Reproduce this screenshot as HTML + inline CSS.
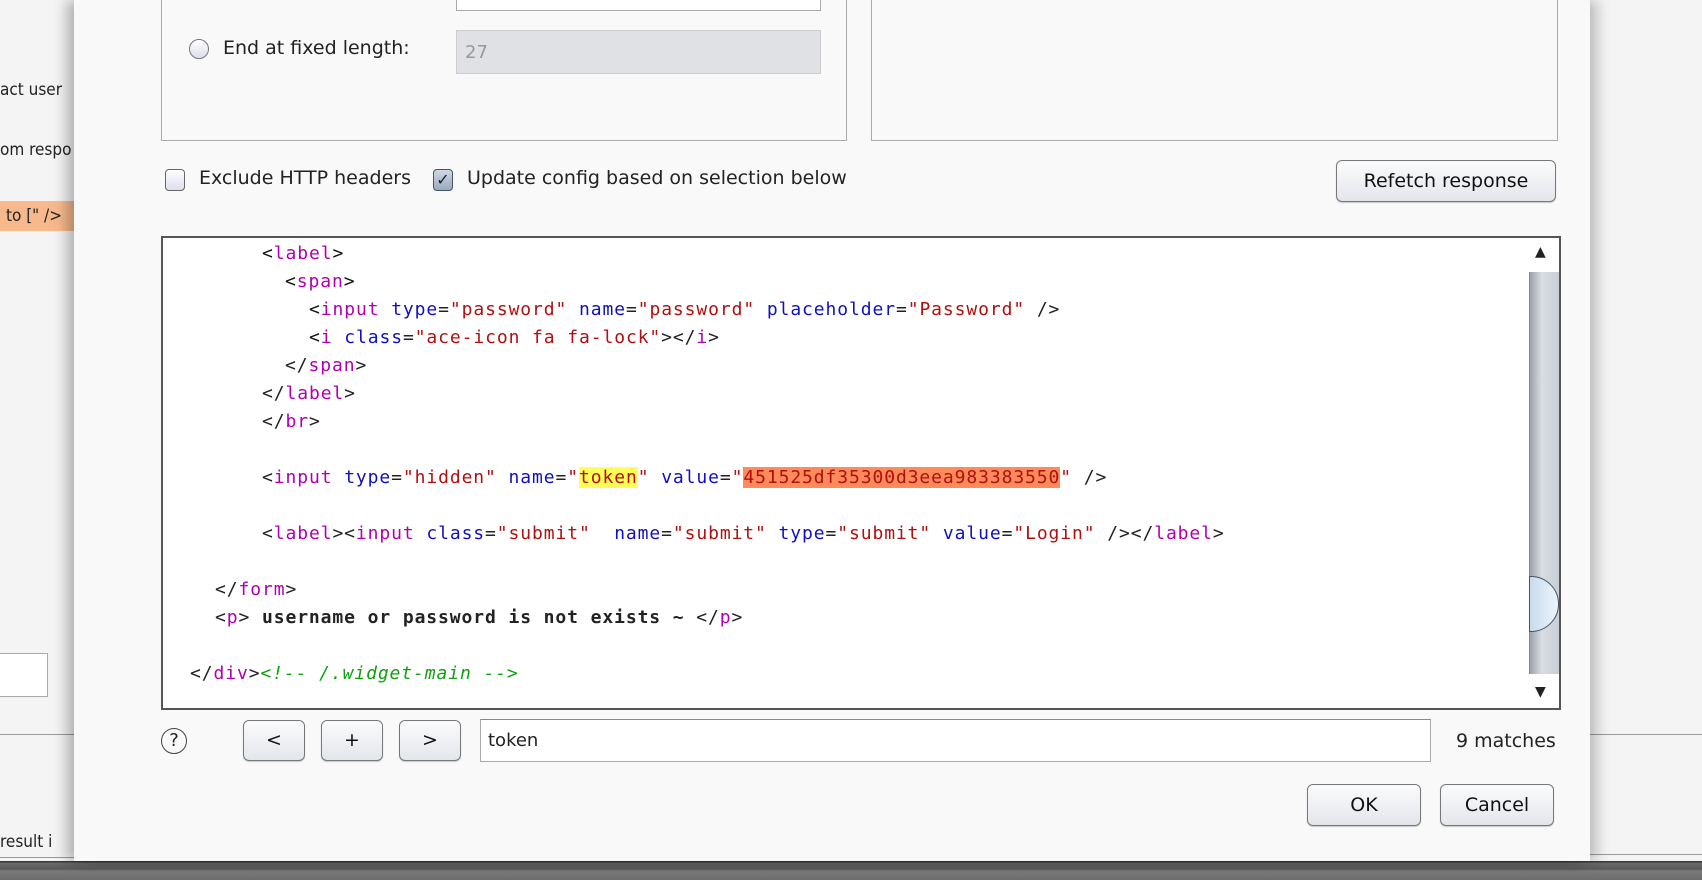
<!DOCTYPE html>
<html><head><meta charset="utf-8"><style>
*{margin:0;padding:0;box-sizing:border-box}
body{width:1702px;height:880px;overflow:hidden;background:#f4f4f4;font-family:"DejaVu Sans","Liberation Sans",sans-serif;font-size:19px;color:#222;position:relative}
.a{position:absolute}
.dlg{left:74px;top:0;width:1516px;height:861px;background:#f9f9f9;box-shadow:-8px 0 12px rgba(0,0,0,.25),8px 0 12px rgba(0,0,0,.2)}
.btn{position:absolute;border:1px solid #777;border-radius:6px;background:linear-gradient(#fbfbfc,#e3e6eb);text-align:center;font-size:19px;color:#111;box-shadow:0 1px 1px rgba(0,0,0,.2)}
.code{font-family:"DejaVu Sans Mono","Liberation Mono",monospace;font-size:18px;white-space:pre;position:absolute;left:0;line-height:28px;letter-spacing:0.9px}
.t{color:#111}.g{color:#b000b0}.at{color:#1010c0}.v{color:#b01010}.c{color:#10a010;font-style:italic}
.sm{font-family:"DejaVu Sans Condensed","DejaVu Sans",sans-serif;font-size:17px}
</style></head><body>
<div class="a sm" style="left:0;top:80px">act user</div>
<div class="a sm" style="left:0;top:140px">om respo</div>
<div class="a sm" style="left:0;top:201px;width:74px;height:30px;background:#f7b98c;line-height:30px;padding-left:6px">to [" /></div>
<div class="a" style="left:-2px;top:653px;width:50px;height:44px;border:1px solid #aaa;background:#fff"></div>
<div class="a" style="left:0;top:734px;width:74px;height:1px;background:#999"></div>
<div class="a sm" style="left:0;top:832px">result i</div>
<div class="a" style="left:0;top:857px;width:74px;height:1px;background:#999"></div>
<div class="a" style="left:1590px;top:734px;width:112px;height:1px;background:#999"></div>
<div class="a" style="left:1590px;top:854px;width:112px;height:1px;background:#999"></div>
<div class="a" style="left:0;top:861px;width:1702px;height:19px;background:linear-gradient(#3a3a3a 0,#3a3a3a 1px,#6a6a6a 2px,#5a5a5a 8px,#7a7a7a 10px,#6c6c6c 19px)"></div>

<div class="a dlg"></div>
<div class="a" style="left:161px;top:-2px;width:686px;height:143px;border:1px solid #aaa"></div>
<div class="a" style="left:871px;top:-2px;width:687px;height:143px;border:1px solid #aaa"></div>
<div class="a" style="left:456px;top:-2px;width:365px;height:13px;border:1px solid #aaa;background:#fff"></div>
<div class="a" style="left:189px;top:39px;width:20px;height:20px;border-radius:50%;border:1px solid #777;background:linear-gradient(#fff,#dde)"></div>
<div class="a" style="left:223px;top:37px">End at fixed length:</div>
<div class="a" style="left:456px;top:30px;width:365px;height:44px;background:#dfe1e5;border:1px solid #ccc;color:#999;padding:11px 8px;font-size:18px">27</div>

<div class="a" style="left:165px;top:169px;width:20px;height:22px;border:1px solid #666;border-radius:4px;background:linear-gradient(#fff,#dde)"></div>
<div class="a" style="left:199px;top:167px">Exclude HTTP headers</div>
<div class="a" style="left:433px;top:169px;width:20px;height:22px;border:1px solid #456;border-radius:4px;background:linear-gradient(#cfd8e6,#9aaac0);font-size:16px;line-height:20px;text-align:center;color:#123">✓</div>
<div class="a" style="left:467px;top:167px">Update config based on selection below</div>
<div class="btn" style="left:1336px;top:160px;width:220px;height:42px;line-height:40px">Refetch response</div>

<div class="a" style="left:161px;top:236px;width:1400px;height:474px;border:2px solid #555;background:#fff;overflow:hidden">
<div class="code" style="top:2px;left:0;padding-left:0">
<span style="position:absolute;left:99px;top:0"><span class="t">&lt;</span><span class="g">label</span><span class="t">&gt;</span></span>
<span style="position:absolute;left:122px;top:28px"><span class="t">&lt;</span><span class="g">span</span><span class="t">&gt;</span></span>
<span style="position:absolute;left:146px;top:56px"><span class="t">&lt;</span><span class="g">input</span> <span class="at">type</span>=<span class="v">"password"</span> <span class="at">name</span>=<span class="v">"password"</span> <span class="at">placeholder</span>=<span class="v">"Password"</span> /&gt;</span>
<span style="position:absolute;left:146px;top:84px"><span class="t">&lt;</span><span class="g">i</span> <span class="at">class</span>=<span class="v">"ace-icon fa fa-lock"</span>&gt;&lt;/<span class="g">i</span>&gt;</span>
<span style="position:absolute;left:122px;top:112px">&lt;/<span class="g">span</span>&gt;</span>
<span style="position:absolute;left:99px;top:140px">&lt;/<span class="g">label</span>&gt;</span>
<span style="position:absolute;left:99px;top:168px">&lt;/<span class="g">br</span>&gt;</span>
<span style="position:absolute;left:99px;top:224px">&lt;<span class="g">input</span> <span class="at">type</span>=<span class="v">"hidden"</span> <span class="at">name</span>=<span class="v">"<span style="background:#ffff55">token</span>"</span> <span class="at">value</span>=<span class="v">"<span style="background:#ff8a5a">451525df35300d3eea983383550</span>"</span> /&gt;</span>
<span style="position:absolute;left:99px;top:280px">&lt;<span class="g">label</span>&gt;&lt;<span class="g">input</span> <span class="at">class</span>=<span class="v">"submit"</span>  <span class="at">name</span>=<span class="v">"submit"</span> <span class="at">type</span>=<span class="v">"submit"</span> <span class="at">value</span>=<span class="v">"Login"</span> /&gt;&lt;/<span class="g">label</span>&gt;</span>
<span style="position:absolute;left:52px;top:336px">&lt;/<span class="g">form</span>&gt;</span>
<span style="position:absolute;left:52px;top:364px">&lt;<span class="g">p</span>&gt; <b>username or password is not exists ~</b> &lt;/<span class="g">p</span>&gt;</span>
<span style="position:absolute;left:27px;top:420px">&lt;/<span class="g">div</span>&gt;<span class="c">&lt;!-- /.widget-main --&gt;</span></span>
</div>
<div class="a" style="left:1366px;top:0;width:30px;height:470px;background:linear-gradient(90deg,#9ea3ab,#d8dce2 40%,#c9ced6);border-left:1px solid #888"></div>
<div class="a" style="left:1366px;top:0;width:30px;height:34px;background:#fff"></div>
<div class="a" style="left:1366px;top:436px;width:30px;height:34px;background:#fff"></div>
<div class="a" style="left:1372px;top:6px;font-size:14px;color:#222">▲</div>
<div class="a" style="left:1372px;top:446px;font-size:14px;color:#222">▼</div>
<div class="a" style="left:1366px;top:338px;width:30px;height:56px;border-radius:0 28px 28px 0;background:linear-gradient(90deg,#c8dbee,#eef5fc);border:1px solid #456"></div>
</div>

<div class="a" style="left:161px;top:728px;width:26px;height:26px;border:1px solid #444;border-radius:50%;text-align:center;line-height:24px;font-size:18px">?</div>
<div class="btn" style="left:243px;top:720px;width:62px;height:41px;line-height:39px">&lt;</div>
<div class="btn" style="left:321px;top:720px;width:62px;height:41px;line-height:39px">+</div>
<div class="btn" style="left:399px;top:720px;width:62px;height:41px;line-height:39px">&gt;</div>
<div class="a" style="left:480px;top:719px;width:951px;height:43px;border:1px solid #aaa;border-top-color:#888;background:#fff;padding:10px 7px;font-size:18px" class="sm">token</div>
<div class="a" style="left:1456px;top:730px;font-size:19px">9 matches</div>
<div class="btn" style="left:1307px;top:784px;width:114px;height:42px;line-height:40px">OK</div>
<div class="btn" style="left:1440px;top:784px;width:114px;height:42px;line-height:40px">Cancel</div>
</body></html>
